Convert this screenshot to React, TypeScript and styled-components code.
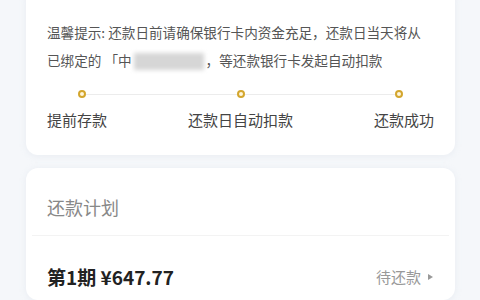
import styled, { createGlobalStyle } from "styled-components";

const GlobalStyle = createGlobalStyle`
  html, body {
    margin: 0;
    padding: 0;
    background: #f5f7fa;
    font-family: "Noto Sans CJK SC", "Noto Sans", sans-serif;
  }
`;

const steps = ["提前存款", "还款日自动扣款", "还款成功"];

export default function App() {
  return (
    <>
      <GlobalStyle />
      <Page>
        <TipCard>
          <TipText>
            温馨提示: 还款日前请确保银行卡内资金充足，还款日当天将从
            <br />
            已绑定的 「中<Masked />，等还款银行卡发起自动扣款
          </TipText>

          <Timeline>
            {steps.map((s, i) => (
              <TimelineItem key={s} $last={i === steps.length - 1}>
                <Dot />
                {i < steps.length - 1 && <Line />}
              </TimelineItem>
            ))}
          </Timeline>

          <Labels>
            {steps.map((s) => (
              <span key={s}>{s}</span>
            ))}
          </Labels>
        </TipCard>

        <PlanCard>
          <PlanHeader>还款计划</PlanHeader>
          <PlanRow>
            <Period>第1期 ¥647.77</Period>
            <Status>
              待还款
              <Arrow />
            </Status>
          </PlanRow>
        </PlanCard>
      </Page>
    </>
  );
}

const Page = styled.div`
  display: flex;
  flex-direction: column;
  gap: 13px;
  padding: 0 25px 0 26px;
  height: 300px;
  overflow: hidden;
`;

const Card = styled.div`
  background: #fff;
  border-radius: 12px;
  box-shadow: 0 1px 6px rgba(200, 210, 225, 0.25);
`;

const TipCard = styled(Card)`
  margin-top: -12px;
  padding: 30px 21px 25px 21px;
`;

const TipText = styled.div`
  font-size: 13.6px;
  line-height: 28px;
  color: #555;
  white-space: nowrap;
`;

const Masked = styled.span`
  display: inline-block;
  width: 70px;
  height: 17px;
  vertical-align: -4px;
  margin: 0 2px;
  background: #d6d6d6;
  filter: blur(2px);
`;

const Timeline = styled.div`
  display: flex;
  align-items: center;
  margin-top: 16px;
  padding: 0 31px;
`;

const TimelineItem = styled.div<{ $last: boolean }>`
  display: flex;
  align-items: center;
  flex: ${(p) => (p.$last ? "0 0 auto" : "1 1 0")};
`;

const Dot = styled.div`
  width: 8px;
  height: 8px;
  box-sizing: border-box;
  border-radius: 50%;
  border: 2px solid #d3a62e;
  background: #fff6dc;
  flex: none;
`;

const Line = styled.div`
  flex: 1;
  height: 1px;
  background: #ececec;
`;

const Labels = styled.div`
  display: flex;
  justify-content: space-between;
  margin-top: 12px;
  font-size: 15px;
  line-height: 20px;
  color: #444;
`;

const PlanCard = styled(Card)`
  flex: 1;
`;

const PlanHeader = styled.div`
  margin: 0 6px;
  padding: 26px 15px 15px 15px;
  font-size: 18px;
  line-height: 26px;
  color: #888;
  border-bottom: 1px solid #f3f3f3;
`;

const PlanRow = styled.div`
  display: flex;
  justify-content: space-between;
  align-items: center;
  padding: 28px 22px 0 21px;
  line-height: 26px;
`;

const Period = styled.span`
  font-size: 19px;
  font-weight: 700;
  color: #222;
`;

const Status = styled.span`
  display: flex;
  align-items: center;
  gap: 7px;
  font-size: 15px;
  color: #999;
`;

const Arrow = styled.span`
  width: 0;
  height: 0;
  border-top: 3.5px solid transparent;
  border-bottom: 3.5px solid transparent;
  border-left: 5px solid #999;
`;
